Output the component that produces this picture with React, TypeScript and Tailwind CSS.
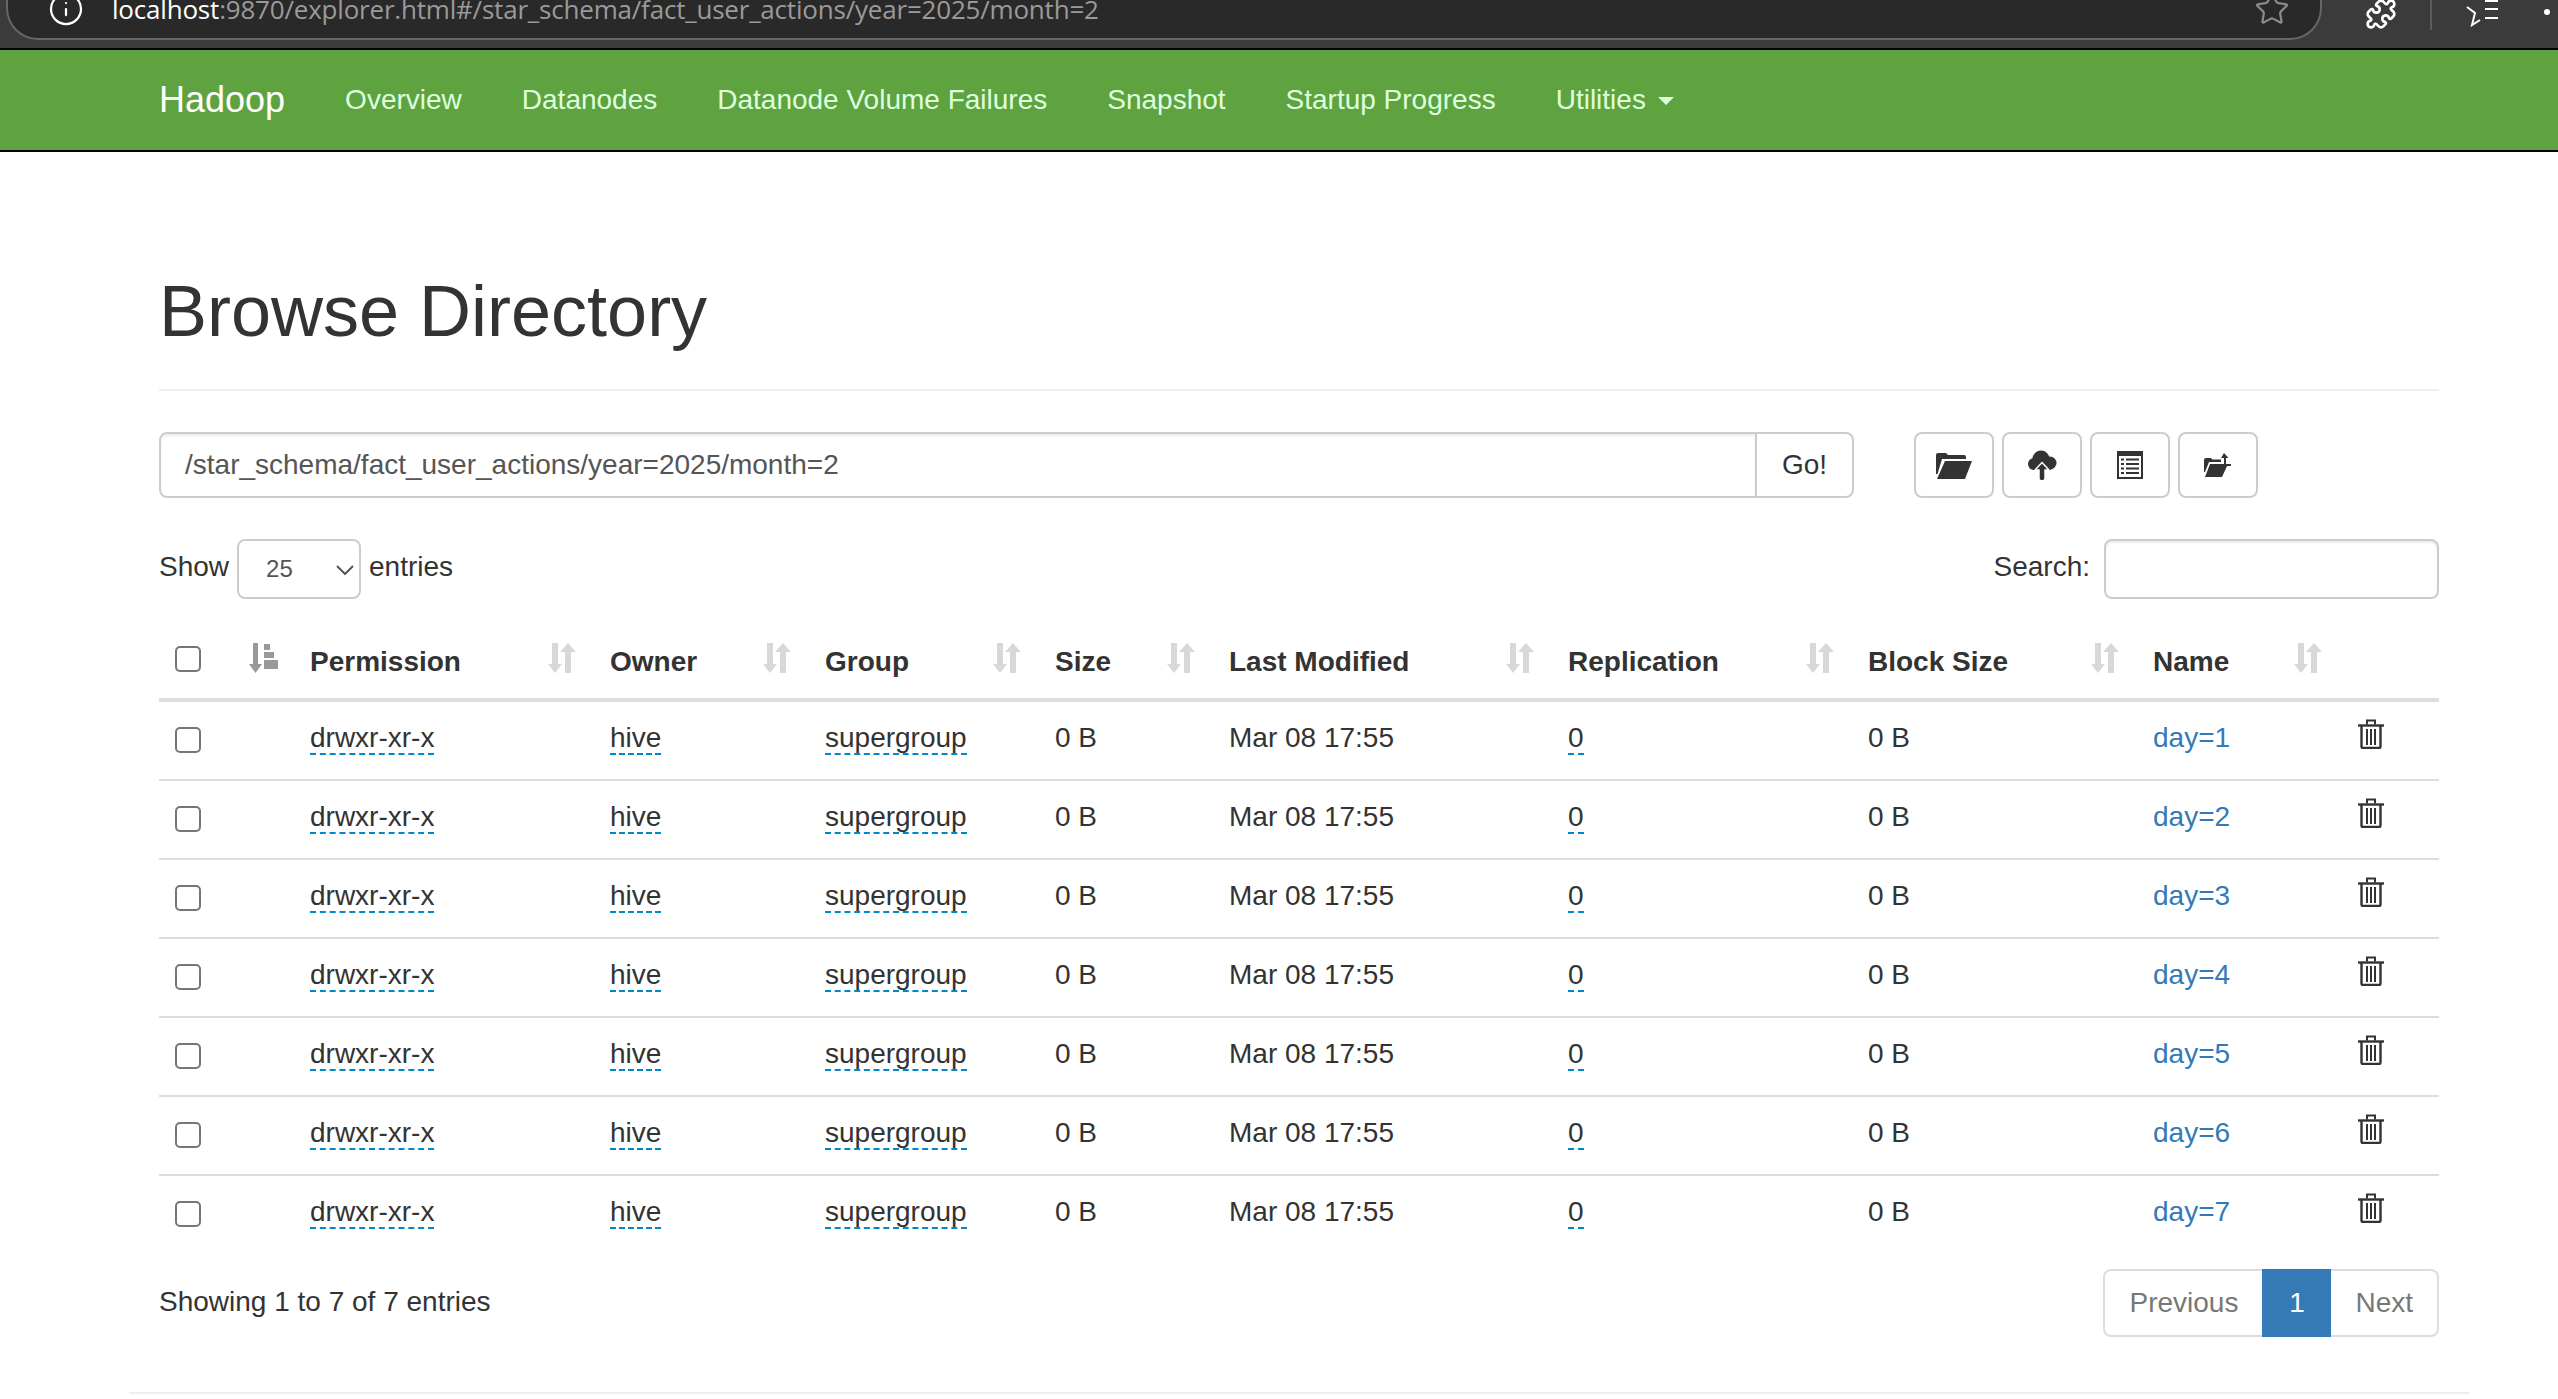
import { Puzzle, Star, Info } from "lucide-react";

const COLS = [135, 300, 215, 230, 174, 339, 300, 285, 203, 99];

const HEADERS = [
  "Permission",
  "Owner",
  "Group",
  "Size",
  "Last Modified",
  "Replication",
  "Block Size",
  "Name",
];

const NAV = [
  "Overview",
  "Datanodes",
  "Datanode Volume Failures",
  "Snapshot",
  "Startup Progress",
];

const ROWS = [1, 2, 3, 4, 5, 6, 7];

function SortIcon() {
  return (
    <svg width="29" height="30" viewBox="0 0 29 30" className="absolute right-[17px] top-[17px]" fill="#d8d8d8">
      <path d="M5 0h6v21h4l-7 9-7-9h4z" transform="translate(-1 0)" />
      <path d="M17 30h6V9h5l-8-9-8 9h5z" transform="translate(0 0)" />
    </svg>
  );
}

function SortedIcon() {
  return (
    <svg width="29" height="30" viewBox="0 0 29 30" className="absolute right-[16px] top-[17px]" fill="#999">
      <path d="M4 0h5v21h4l-6.5 9L0 21h4z" />
      <rect x="15" y="1" width="6" height="6" />
      <rect x="15" y="9" width="10" height="6" />
      <rect x="15" y="17" width="14" height="9" />
    </svg>
  );
}

function TrashIcon() {
  return (
    <svg width="26" height="30" viewBox="0 0 26 30" className="ml-[2px] mt-[1px]" fill="none" stroke="#333">
      <path d="M0 6.5h26" strokeWidth="2.4" />
      <path d="M9 5.5V1.5h8v4" strokeWidth="2" />
      <path d="M3.5 7v20.5a1.5 1.5 0 0 0 1.5 1.5h16a1.5 1.5 0 0 0 1.5-1.5V7" strokeWidth="2.4" />
      <path d="M9 10v16M13 10v16M17 10v16" strokeWidth="2" />
    </svg>
  );
}

function Checkbox() {
  return <input type="checkbox" className="appearance-none block size-[26px] rounded-[5px] border-2 border-[#767676] bg-white" />;
}

function FolderOpenIcon() {
  return (
    <svg width="36" height="27" viewBox="0 0 36 27" fill="#333">
      <path d="M0 5V3a2 2 0 0 1 2-2h8l2 2h16a2 2 0 0 1 2 2v2H6L1.500 22H0z" />
      <path d="M9 9h27l-7 18H1z" />
    </svg>
  );
}

function CloudUploadIcon() {
  return (
    <svg width="30" height="30" viewBox="0 0 30 30" fill="#333">
      <circle cx="7" cy="14" r="6" />
      <circle cx="14" cy="9" r="8.500" />
      <circle cx="23" cy="13" r="6.500" />
      <path d="M15 12l-7 8h-2v-4h18v4h-2z" />
      <path d="M15 12.500L22 20h-4v10h-6V20H8z" stroke="#fff" strokeWidth="1.500" />
      <path d="M15 15l4 4h-2.500v11h-3V19H11z" />
    </svg>
  );
}

function ListAltIcon() {
  return (
    <svg width="26" height="28" viewBox="0 0 26 28">
      <rect width="26" height="28" fill="#333" />
      <rect x="2" y="5" width="22" height="21" fill="#fff" />
      <g fill="#333">
        <rect x="4" y="7.500" width="3" height="2" />
        <rect x="9" y="7.500" width="13" height="2" />
        <rect x="4" y="12" width="3" height="2" />
        <rect x="9" y="12" width="13" height="2" />
        <rect x="4" y="16.500" width="3" height="2" />
        <rect x="9" y="16.500" width="13" height="2" />
        <rect x="4" y="21" width="3" height="2" />
        <rect x="9" y="21" width="13" height="2" />
      </g>
    </svg>
  );
}

function FolderUpIcon() {
  return (
    <svg width="28" height="24" viewBox="0 0 28 24" fill="#333">
      <path d="M0 8V7a2 2 0 0 1 2-2h5l1.500 1.500H17V9H5L1 19H0z" />
      <path d="M6 11h18l-6 13H1z" />
      <path d="M20 0l4.500 5H22v6h5v2h-7V5h-3z" />
    </svg>
  );
}

function FavoritesIcon() {
  return (
    <svg width="34" height="30" viewBox="0 0 34 30" fill="none" stroke="#fff" strokeWidth="2">
      <path d="M15 -8l3 6M2 7l8 6-3 12 8-5" />
      <path d="M20 1h13M20 9h13M20 18h13" />
    </svg>
  );
}

export default function App() {
  return (
    <div className="h-[1399px] overflow-hidden bg-white font-['Liberation_Sans',Arial,sans-serif] text-[28px] leading-[40px] text-[#333]">
      {/* browser chrome, cut off at the top */}
      <div className="flex h-[50px] items-start overflow-hidden border-b-2 border-black bg-[#3b3b3b]">
        <div className="ml-[6px] flex h-[40px] w-[2316px] shrink-0 items-end rounded-b-[32px] border-x-2 border-b-2 border-[#666] bg-[#292929] pb-[11px]">
          <Info size={36} color="#fff" strokeWidth={1.500} className="ml-[40px] shrink-0" />
          <div className="ml-[28px] whitespace-nowrap font-['Open_Sans',sans-serif] text-[26px] leading-[36px] tracking-[-0.2px] text-[#9a9a9a]">
            <span className="text-white">localhost</span>:9870/explorer.html#/star_schema/fact_user_actions/year=2025/month=2
          </div>
          <Star size={36} color="#8a8a8a" strokeWidth={1.500} className="ml-auto mr-[30px] shrink-0" />
        </div>
        <div className="flex h-[30px] items-end gap-[33px] pl-[43px]">
          <Puzzle size={32} color="#fff" strokeWidth={2} className="shrink-0" />
          <div className="h-[30px] w-[2px] bg-[#5c5c5c]" />
          <FavoritesIcon />
        </div>
        <div className="ml-[45px] mt-[9px] size-[6px] rounded-full bg-white" />
      </div>

      <nav className="flex h-[102px] items-start border-b-2 border-black bg-[#5fa341] pl-[159px]">
        <span className="mr-[30px] py-[30px] text-[36px] leading-[40px] text-white">Hadoop</span>
        {NAV.map((item) => (
          <a key={item} className="px-[30px] py-[30px] text-[#ddffdd]">
            {item}
          </a>
        ))}
        <a className="flex items-center px-[30px] py-[30px] text-[#ddffdd]">
          Utilities
          <span className="ml-[12px] mt-[2px] size-0 border-x-[8px] border-t-[8px] border-x-transparent border-t-[#ddffdd]" />
        </a>
      </nav>

      <main className="ml-[129px] w-[2340px]">
        <div className="px-[30px]">
          <div className="mt-[120px] mb-[41px] border-b-2 border-[#eee] pb-[18px]">
            <h1 className="mb-[20px] text-[72px] font-medium leading-[79px]">Browse Directory</h1>
          </div>

          <div className="flex h-[66px] items-start">
            <div className="flex h-[66px] w-[1695px]">
              <input
                readOnly
                value="/star_schema/fact_user_actions/year=2025/month=2"
                className="h-full flex-1 rounded-l-lg border-2 border-[#ccc] px-[24px] text-[28px] text-[#555] shadow-[inset_0_2px_2px_rgba(0,0,0,0.075)]"
              />
              <button className="-ml-[2px] w-[99px] rounded-r-lg border-2 border-[#ccc] bg-white text-center">Go!</button>
            </div>
            <div className="ml-[60px] flex gap-[8px]">
              <button className="flex h-[66px] w-[80px] items-center justify-center rounded-lg border-2 border-[#ccc] bg-white">
                <FolderOpenIcon />
              </button>
              <button className="flex h-[66px] w-[80px] items-center justify-center rounded-lg border-2 border-[#ccc] bg-white">
                <CloudUploadIcon />
              </button>
              <button className="flex h-[66px] w-[80px] items-center justify-center rounded-lg border-2 border-[#ccc] bg-white">
                <ListAltIcon />
              </button>
              <button className="flex h-[66px] w-[80px] items-center justify-center rounded-lg border-2 border-[#ccc] bg-white">
                <FolderUpIcon />
              </button>
            </div>
          </div>

          <div className="mt-[41px] flex h-[60px] items-start justify-between">
            <div className="flex items-start gap-[8px]">
              <span className="mt-[8px]">Show</span>
              <div className="relative">
                <select className="block h-[60px] w-[124px] appearance-none rounded-lg border-2 border-[#ccc] bg-white pl-[27px] text-[24px] text-[#555]">
                  <option>25</option>
                </select>
                <svg width="18" height="10" viewBox="0 0 18 10" fill="none" stroke="#555" strokeWidth="2" className="absolute right-[7px] top-[26px]">
                  <path d="M1 1l8 8 8-8" />
                </svg>
              </div>
              <span className="mt-[8px]">entries</span>
            </div>
            <div className="flex items-start gap-[14px]">
              <span className="mt-[8px]">Search:</span>
              <input className="h-[60px] w-[335px] rounded-lg border-2 border-[#ccc] shadow-[inset_0_2px_2px_rgba(0,0,0,0.075)]" />
            </div>
          </div>

          <table className="mt-[27px] w-[2280px] table-fixed border-separate border-spacing-0">
            <colgroup>
              {COLS.map((w, i) => (
                <col key={i} style={{ width: w }} />
              ))}
            </colgroup>
            <thead>
              <tr>
                <th className="relative border-b-4 border-[#ddd] px-4 pt-[20px] pb-[16px] align-top">
                  <Checkbox />
                  <SortedIcon />
                </th>
                {HEADERS.map((h) => (
                  <th key={h} className="relative border-b-4 border-[#ddd] px-4 pt-4 pb-4 text-left align-top font-bold">
                    {h}
                    <SortIcon />
                  </th>
                ))}
                <th className="border-b-4 border-[#ddd]" />
              </tr>
            </thead>
            <tbody>
              {ROWS.map((n) => (
                <tr key={n} className="h-[79px]">
                  <td className="border-b-2 border-[#ddd] px-4 pt-[25px] align-top [tr:last-child>&]:border-b-0">
                    <Checkbox />
                  </td>
                  {["drwxr-xr-x", "hive", "supergroup"].map((v) => (
                    <td key={v} className="border-b-2 border-[#ddd] px-4 pt-4 align-top [tr:last-child>&]:border-b-0">
                      <a className="border-b-2 border-dashed border-[#0088cc]">{v}</a>
                    </td>
                  ))}
                  <td className="border-b-2 border-[#ddd] px-4 pt-4 align-top [tr:last-child>&]:border-b-0">0 B</td>
                  <td className="border-b-2 border-[#ddd] px-4 pt-4 align-top [tr:last-child>&]:border-b-0">Mar 08 17:55</td>
                  <td className="border-b-2 border-[#ddd] px-4 pt-4 align-top [tr:last-child>&]:border-b-0">
                    <a className="border-b-2 border-dashed border-[#0088cc]">0</a>
                  </td>
                  <td className="border-b-2 border-[#ddd] px-4 pt-4 align-top [tr:last-child>&]:border-b-0">0 B</td>
                  <td className="border-b-2 border-[#ddd] px-4 pt-4 align-top text-[#337ab7] [tr:last-child>&]:border-b-0">day={n}</td>
                  <td className="border-b-2 border-[#ddd] px-4 pt-4 align-top [tr:last-child>&]:border-b-0">
                    <TrashIcon />
                  </td>
                </tr>
              ))}
            </tbody>
          </table>

          <div className="mt-[14px] flex items-start justify-between">
            <div className="mt-[13px]">Showing 1 to 7 of 7 entries</div>
            <div className="flex h-[68px] text-[#777]">
              <span className="flex items-center rounded-l-lg border-2 border-[#ddd] px-[24px]">Previous</span>
              <span className="-ml-[2px] flex w-[69px] items-center justify-center bg-[#337ab7] text-white">1</span>
              <span className="flex items-center rounded-r-lg border-2 border-l-0 border-[#ddd] px-[24px]">Next</span>
            </div>
          </div>
        </div>
        <hr className="mt-[55px] border-t-2 border-[#eee]" />
      </main>
    </div>
  );
}
